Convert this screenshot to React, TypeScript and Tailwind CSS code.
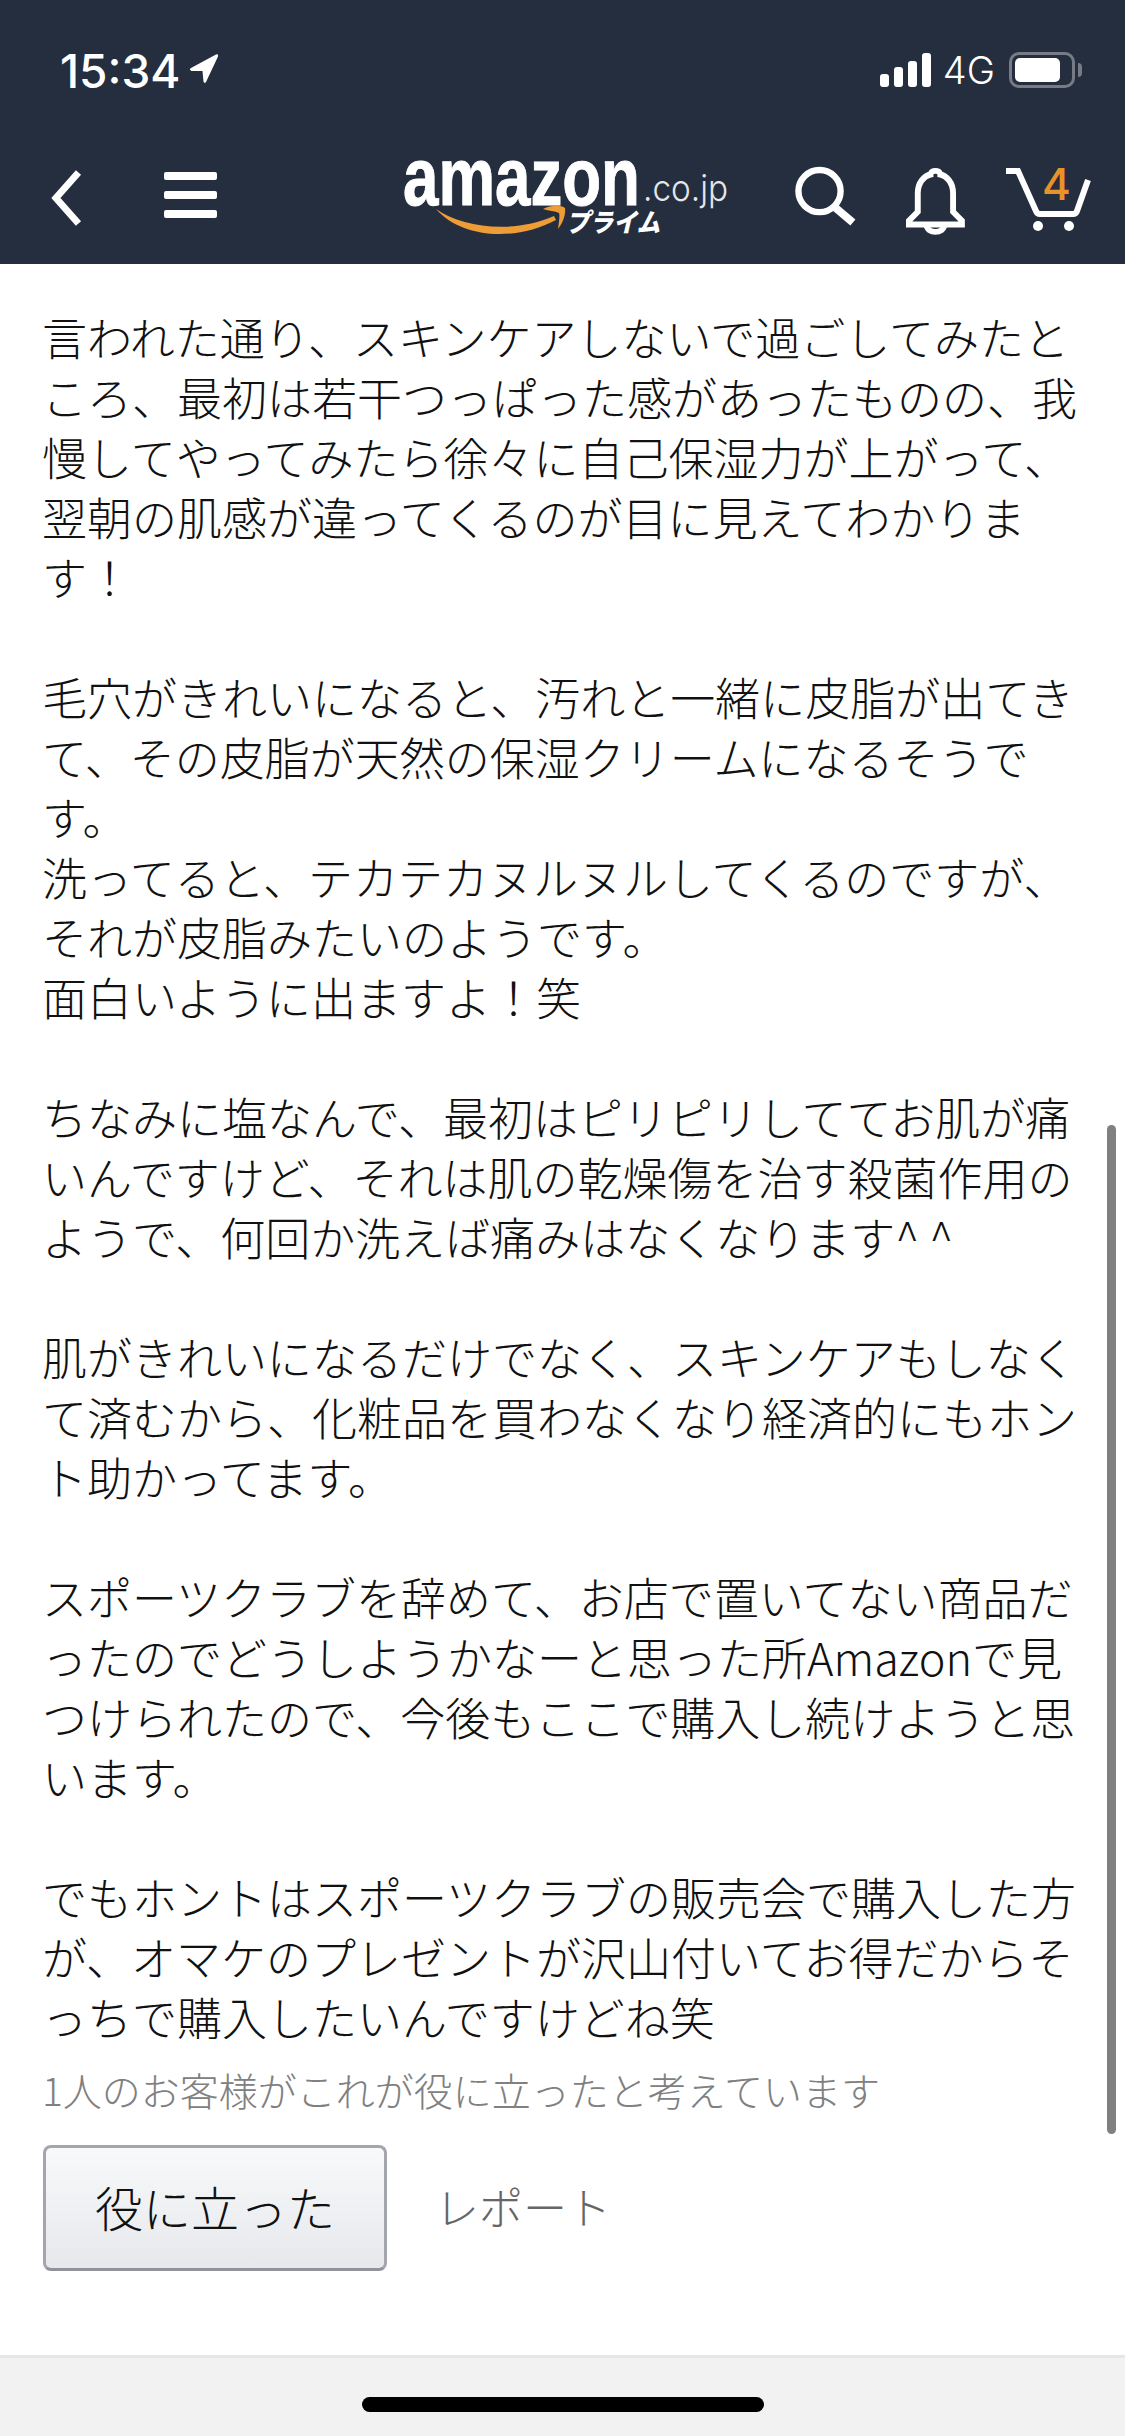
const FONT = "font-['Noto_Sans_CJK_JP','Hiragino_Sans',sans-serif]";

const body = `言われた通り、スキンケアしないで過ごしてみたと
ころ、最初は若干つっぱった感があったものの、我
慢してやってみたら徐々に自己保湿力が上がって、
翌朝の肌感が違ってくるのが目に見えてわかりま
す！

毛穴がきれいになると、汚れと一緒に皮脂が出てき
て、その皮脂が天然の保湿クリームになるそうで
す。
洗ってると、テカテカヌルヌルしてくるのですが、
それが皮脂みたいのようです。
面白いように出ますよ！笑

ちなみに塩なんで、最初はピリピリしててお肌が痛
いんですけど、それは肌の乾燥傷を治す殺菌作用の
ようで、何回か洗えば痛みはなくなります^ ^

肌がきれいになるだけでなく、スキンケアもしなく
て済むから、化粧品を買わなくなり経済的にもホン
ト助かってます。

スポーツクラブを辞めて、お店で置いてない商品だ
ったのでどうしようかなーと思った所Amazonで見
つけられたので、今後もここで購入し続けようと思
います。

でもホントはスポーツクラブの販売会で購入した方
が、オマケのプレゼントが沢山付いてお得だからそ
っちで購入したいんですけどね笑`;

function StatusBar() {
  return (
    <div className="flex h-[142px] items-start justify-between pl-[60px] pr-[43px] pt-[45px]">
      <div className="flex items-center gap-[8px]">
        <span className="font-['Inter',sans-serif] text-[46px] font-medium leading-[52px] text-white">15:34</span>
        <svg width="30" height="31" viewBox="0 0 30 31" className="mt-[-6px]">
          <path d="M2 15 L27 1.5 Q29.5 0.5 29 3.5 L17 29 Q15.5 31 14.5 28.5 L13.5 18 L2.5 18 Q-0.5 16.5 2 15Z" fill="#fff" />
        </svg>
      </div>
      <div className="flex items-center pt-[5px]">
        <svg width="52" height="34" viewBox="0 0 52 34" fill="#fff">
          <rect x="0" y="21" width="9" height="13" rx="3" />
          <rect x="14" y="14" width="9" height="20" rx="3" />
          <rect x="28" y="8" width="9" height="26" rx="3" />
          <rect x="42" y="0" width="9" height="34" rx="3" />
        </svg>
        <span className="ml-[11px] font-['Inter',sans-serif] text-[38px] font-light leading-[40px] text-white">4G</span>
        <div className="ml-[14px] flex items-center">
          <div className="flex h-[36px] w-[66px] items-center rounded-[10px] border-[3px] border-[#767b85] p-[3px]">
            <div className="h-full w-[45px] rounded-[5px] bg-white" />
          </div>
          <div className="ml-[3px] h-[14px] w-[4px] rounded-r-full bg-[#767b85]" />
        </div>
      </div>
    </div>
  );
}

function AmazonLogo() {
  return (
    <svg width="326" height="82" viewBox="0 0 326 82" className="overflow-visible font-['Liberation_Sans',sans-serif]">
      <text x="0" y="47" fontSize="82" fontWeight="700" fill="#fff" stroke="#fff" strokeWidth="1" textLength="237" lengthAdjust="spacingAndGlyphs">
        amazon
      </text>
      <text x="240" y="43" fontSize="37" fill="#e4e6ea" textLength="85" lengthAdjust="spacingAndGlyphs" fontFamily="Inter, sans-serif" fontWeight="300">
        .co.jp
      </text>
      <text
        x="163"
        y="74"
        fontSize="26"
        fontWeight="900"
        fontStyle="italic"
        fill="#fff"
        textLength="94"
        lengthAdjust="spacingAndGlyphs"
        fontFamily="'Noto Sans CJK JP', sans-serif"
      >
        プライム
      </text>
      <path d="M33 51 C60 70 110 76 151 58 L153 62 C112 84 58 80 33 51Z" fill="#ed9c36" />
      <path d="M140 51 C148 47 158 47 162 50 C163 56 160 65 155 71 C156 64 157 58 156 55 C152 53 146 53 140 51Z" fill="#ed9c36" />
    </svg>
  );
}

function NavBar() {
  return (
    <div className="flex h-[122px] items-start pl-[51px] pr-[34px]">
      <svg width="32" height="58" viewBox="0 0 32 58" fill="none" stroke="#fff" strokeWidth="7" className="mt-[27px]">
        <path d="M28 3 L5 29 L28 55" />
      </svg>
      <div className="ml-[82px] mt-[30px] flex w-[54px] flex-col gap-[11px]">
        <div className="h-[8px] rounded-[2px] bg-white" />
        <div className="h-[8px] rounded-[2px] bg-white" />
        <div className="h-[8px] rounded-[2px] bg-white" />
      </div>
      <div className="ml-[186px] mt-[16px]">
        <AmazonLogo />
      </div>
      <svg width="62" height="60" viewBox="0 0 62 60" fill="none" stroke="#fff" strokeWidth="6.5" className="ml-[66px] mt-[24px]">
        <circle cx="25" cy="25" r="21.5" />
        <path d="M40 41 L59 57" strokeWidth="8" />
      </svg>
      <svg width="60" height="68" viewBox="0 0 60 68" fill="none" stroke="#fff" strokeWidth="6" className="ml-[50px] mt-[25px]">
        <path d="M3 58 V54 L12 45 V26 C12 15 19 8 25 7 C25 2 35 2 35 7 C41 8 48 15 48 26 V45 L57 54 V58 Z" />
        <path d="M21 58 C21 68 39 68 39 58" />
      </svg>
      <div className="relative ml-[40px] mt-[25px] h-[66px] w-[86px]">
        <svg width="86" height="66" viewBox="0 0 86 66" fill="none" stroke="#fff" strokeWidth="6">
          <path d="M1 4 H13 L31 44 Q32 47 35 47 H68 Q71 47 72 44 L83 13" />
          <circle cx="33" cy="59" r="5" fill="#fff" stroke="none" />
          <circle cx="64" cy="59" r="5" fill="#fff" stroke="none" />
        </svg>
        <span className="absolute left-[37px] top-[-7px] font-['Inter',sans-serif] text-[44px] font-medium leading-[48px] text-[#e8922a]">
          4
        </span>
      </div>
    </div>
  );
}

export default function App() {
  return (
    <div className={`relative flex h-[2436px] w-[1125px] flex-col overflow-hidden bg-white ${FONT}`}>
      <header className="h-[264px] shrink-0 bg-[#252e3e]">
        <StatusBar />
        <NavBar />
      </header>

      <main className="flex-1 pl-[42px] pt-[43px]">
        <p className="whitespace-pre-line text-[45px] font-light leading-[60px] text-[#111]">{body}</p>
        <p className="mt-[17px] text-[39px] font-light leading-[50px] text-[#808080]">1人のお客様がこれが役に立ったと考えています</p>
        <div className="mt-[31px] flex items-center">
          <button className="ml-[1px] h-[126px] w-[344px] rounded-[8px] border-[3px] border-[#a3a6ac] border-b-[#90939a] bg-gradient-to-b from-[#f8f9fa] to-[#e7e8ec] pb-[4px] text-[48px] font-light text-[#111]">
            役に立った
          </button>
          <span className="mb-[5px] ml-[48px] text-[44px] font-light text-[#666]">レポート</span>
        </div>
      </main>

      {/* scroll indicator */}
      <div className="absolute right-[9px] top-[1125px] h-[1009px] w-[9px] rounded-full bg-[#808080]" />

      <footer className="flex h-[81px] shrink-0 items-start justify-center border-t-[3px] border-[#e6e6e6] bg-[#f2f2f2] pt-[39px]">
        <div className="h-[15px] w-[402px] rounded-full bg-black" />
      </footer>
    </div>
  );
}
